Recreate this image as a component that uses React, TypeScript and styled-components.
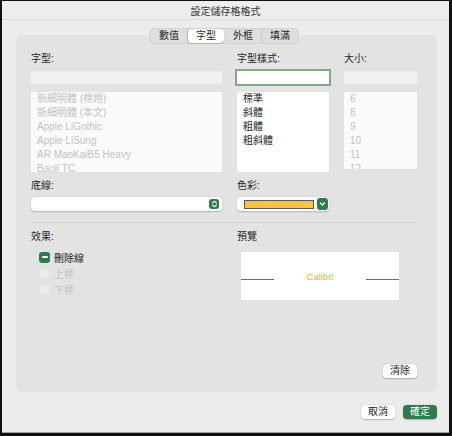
import styled, { createGlobalStyle } from 'styled-components'

const GlobalStyle = createGlobalStyle`
  html, body {
    margin: 0;
    padding: 0;
    background: #111;
  }
  body {
    font-family: "Liberation Sans", "Noto Sans CJK TC", sans-serif;
    font-size: 10px;
    color: #262626;
  }
`

const Frame = styled.div`
  width: 452px;
  height: 436px;
  box-sizing: border-box;
  border-style: solid;
  border-color: #111;
  border-width: 1px 3px 3px 2px;
  background: #ececec;
  display: flex;
  flex-direction: column;
  box-shadow: inset 0 -1px 0 #a3a3a3;
`

const TitleBar = styled.div`
  height: 19px;
  border-bottom: 1px solid #dddddd;
  background: #ededed;
  display: flex;
  align-items: center;
  justify-content: center;
  font-size: 10px;
  color: #333;
  padding-top: 1px;
  box-sizing: border-box;
`

const Body = styled.div`
  flex: 1;
  display: flex;
  flex-direction: column;
  padding: 15px 12px 0 14px;
`

const Panel = styled.div`
  height: 357px;
  box-sizing: border-box;
  background: #e3e3e3;
  border-radius: 6px;
  padding: 0 20px 14px 15px;
  display: flex;
  flex-direction: column;
`

const Tabs = styled.div`
  align-self: center;
  margin-top: -7px;
  height: 16px;
  box-sizing: border-box;
  display: flex;
  background: #dedede;
  border: 1px solid #d3d3d3;
  border-radius: 5px;
`

const Tab = styled.div<{ $active?: boolean; $divider?: boolean }>`
  width: 36px;
  height: 14px;
  line-height: 14px;
  text-align: center;
  font-size: 10px;
  color: #2a2a2a;
  border-radius: 4px;
  position: relative;
  background: ${(p) => (p.$active ? '#ffffff' : 'transparent')};
  box-shadow: ${(p) => (p.$active ? '0 0.5px 1px rgba(0,0,0,0.18)' : 'none')};
  border-left: 1px solid ${(p) => (p.$divider ? '#c9c9c9' : 'transparent')};
  background-clip: padding-box;
`

const Grid = styled.div<{ $top: number }>`
  display: grid;
  grid-template-columns: 191px 92px 73px;
  column-gap: 15px;
  margin-top: ${(p) => p.$top}px;
  align-items: start;
`

const Field = styled.div<{ $span?: number }>`
  display: flex;
  flex-direction: column;
  grid-column: span ${(p) => p.$span ?? 1};
`

const Label = styled.div<{ $gap?: number }>`
  font-size: 10px;
  line-height: 14px;
  height: 14px;
  color: #262626;
  margin-bottom: ${(p) => p.$gap ?? 5}px;
`

const TextBox = styled.div<{ $focused?: boolean }>`
  height: 13px;
  background: ${(p) => (p.$focused ? '#ffffff' : '#f1f1f1')};
  box-shadow: ${(p) =>
    p.$focused ? '0 0 0 2px #82a98a' : 'inset 0 0.5px 0 #e4e4e4'};
`

const List = styled.div<{ $height: number; $muted?: boolean }>`
  margin-top: 8px;
  height: ${(p) => p.$height}px;
  overflow: hidden;
  background: ${(p) => (p.$muted ? '#fafafa' : '#ffffff')};
  padding: 0 6px;
  box-sizing: border-box;
`

const ListItem = styled.div<{ $muted?: boolean }>`
  font-size: 10px;
  line-height: 14px;
  white-space: nowrap;
  color: ${(p) => (p.$muted ? '#c2c2c2' : '#262626')};
`

const Select = styled.div`
  height: 14px;
  background: #ffffff;
  border-radius: 4px;
  box-shadow: 0 0.5px 1.5px rgba(0, 0, 0, 0.22);
  display: flex;
  align-items: center;
  justify-content: flex-end;
  padding-right: 3px;
`

const ColorSelect = styled(Select)`
  justify-content: space-between;
  padding: 0 1px 0 7px;
`

const Swatch = styled.div`
  width: 70px;
  height: 9px;
  box-sizing: border-box;
  background: #f6c343;
  border: 1px solid #5a5a5a;
`

const GreenKey = styled.div<{ $w: number; $h: number }>`
  width: ${(p) => p.$w}px;
  height: ${(p) => p.$h}px;
  border-radius: 3px;
  background: #2f7b4e;
  display: flex;
  align-items: center;
  justify-content: center;
`

const Separator = styled.div`
  height: 1px;
  background: #d5d5d5;
  margin-top: 11px;
`

const CheckRow = styled.div<{ $muted?: boolean }>`
  height: 16px;
  display: flex;
  align-items: center;
  gap: 4px;
  padding-left: 8px;
  font-size: 10px;
  color: ${(p) => (p.$muted ? '#c4c4c4' : '#222')};
`

const Box = styled.div<{ $checked?: boolean }>`
  width: 11px;
  height: 11px;
  box-sizing: border-box;
  border-radius: 3px;
  display: flex;
  align-items: center;
  justify-content: center;
  background: ${(p) => (p.$checked ? '#2f7b4e' : '#ececec')};
  border: ${(p) => (p.$checked ? 'none' : '1px solid #e2e2e2')};
`

const Dash = styled.div`
  width: 6px;
  height: 1.5px;
  background: #fff;
  border-radius: 1px;
`

const Preview = styled.div`
  margin: 3px 0 0 4px;
  width: 158px;
  height: 48px;
  background: #ffffff;
  display: flex;
  align-items: center;
  justify-content: space-between;
  padding-top: 1px;
  box-sizing: border-box;
`

const PreviewLine = styled.div`
  width: 33px;
  height: 1.5px;
  background: #6d6d6d;
  margin-top: 6px;
`

const PreviewText = styled.div`
  font-family: "Liberation Sans", sans-serif;
  font-size: 9.5px;
  color: #f2b32c;
`

const ButtonRow = styled.div`
  margin-top: auto;
  display: flex;
  justify-content: flex-end;
  gap: 8px;
`

const Button = styled.div<{ $primary?: boolean }>`
  width: 34px;
  height: 14px;
  line-height: 14px;
  text-align: center;
  font-size: 10px;
  border-radius: 4px;
  background: ${(p) => (p.$primary ? '#2f7b4e' : '#ffffff')};
  color: ${(p) => (p.$primary ? '#ffffff' : '#262626')};
  box-shadow: 0 0.5px 1.5px rgba(0, 0, 0, 0.25);
`

const Footer = styled(ButtonRow)`
  margin-top: 13px;
`

const fontNames = [
  '新細明體 (標題)',
  '新細明體 (本文)',
  'Apple LiGothic',
  'Apple LiSung',
  'AR MaoKaiB5 Heavy',
  'Baoli TC',
]
const styles = ['標準', '斜體', '粗體', '粗斜體']
const sizes = ['6', '8', '9', '10', '11', '12']

function Stepper() {
  return (
    <svg width="7" height="8" viewBox="0 0 7 8">
      <path d="M1.5 3 L3.5 1.2 L5.5 3 M1.5 5 L3.5 6.8 L5.5 5" fill="none" stroke="#fff" strokeWidth="1.1" strokeLinecap="round" strokeLinejoin="round" />
    </svg>
  )
}

function Chevron() {
  return (
    <svg width="7" height="6" viewBox="0 0 7 6">
      <path d="M1.5 2 L3.5 4 L5.5 2" fill="none" stroke="#fff" strokeWidth="1.2" strokeLinecap="round" strokeLinejoin="round" />
    </svg>
  )
}

export default function App() {
  return (
    <>
      <GlobalStyle />
      <Frame>
        <TitleBar>設定儲存格格式</TitleBar>
        <Body>
          <Panel>
            <Tabs>
              <Tab>數值</Tab>
              <Tab $active>字型</Tab>
              <Tab>外框</Tab>
              <Tab $divider>填滿</Tab>
            </Tabs>

            <Grid $top={8}>
              <Field>
                <Label>字型:</Label>
                <TextBox />
                <List $height={80} $muted>
                  {fontNames.map((f) => (
                    <ListItem key={f} $muted>{f}</ListItem>
                  ))}
                </List>
              </Field>
              <Field>
                <Label>字型樣式:</Label>
                <TextBox $focused />
                <List $height={80}>
                  {styles.map((s) => (
                    <ListItem key={s}>{s}</ListItem>
                  ))}
                </List>
              </Field>
              <Field>
                <Label>大小:</Label>
                <TextBox />
                <List $height={77} $muted>
                  {sizes.map((s) => (
                    <ListItem key={s} $muted>{s}</ListItem>
                  ))}
                </List>
              </Field>
            </Grid>

            <Grid $top={7}>
              <Field>
                <Label $gap={4}>底線:</Label>
                <Select>
                  <GreenKey $w={10} $h={10}>
                    <Stepper />
                  </GreenKey>
                </Select>
              </Field>
              <Field>
                <Label $gap={4}>色彩:</Label>
                <ColorSelect>
                  <Swatch />
                  <GreenKey $w={11} $h={12}>
                    <Chevron />
                  </GreenKey>
                </ColorSelect>
              </Field>
            </Grid>

            <Separator />

            <Grid $top={7}>
              <Field>
                <Label>效果:</Label>
                <CheckRow>
                  <Box $checked>
                    <Dash />
                  </Box>
                  刪除線
                </CheckRow>
                <CheckRow $muted>
                  <Box />
                  上標
                </CheckRow>
                <CheckRow $muted>
                  <Box />
                  下標
                </CheckRow>
              </Field>
              <Field $span={2}>
                <Label>預覽</Label>
                <Preview>
                  <PreviewLine />
                  <PreviewText>Calibri</PreviewText>
                  <PreviewLine />
                </Preview>
              </Field>
            </Grid>

            <ButtonRow>
              <Button>清除</Button>
            </ButtonRow>
          </Panel>
          <Footer>
            <Button>取消</Button>
            <Button $primary>確定</Button>
          </Footer>
        </Body>
      </Frame>
    </>
  )
}
